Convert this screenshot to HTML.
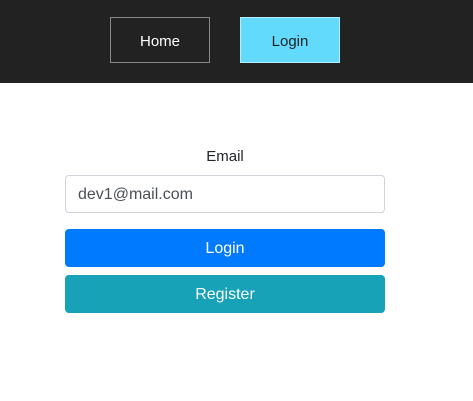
<!DOCTYPE html>
<html><head><style>
body{margin:0;width:473px;height:401px;background:#fff;font-family:"Liberation Sans",sans-serif;position:relative;overflow:hidden}
.nav{position:absolute;left:0;top:0;width:473px;height:83px;background:#222}
.b{position:absolute;box-sizing:border-box;display:flex;align-items:center;justify-content:center;font-size:15px;padding-top:2px}
</style></head><body>
<div class="nav"></div>
<div class="b" style="left:110px;top:17px;width:100px;height:46px;border:1px solid #888;color:#fff">Home</div>
<div class="b" style="left:240px;top:17px;width:100px;height:46px;border:1px solid #b8ecff;background:#61dafb;color:#222">Login</div>
<div class="b" style="left:65px;top:145px;width:320px;height:20px;color:#212529">Email</div>
<div class="b" style="left:65px;top:175px;width:320px;height:38px;border:1px solid #ced4da;border-radius:4px;justify-content:flex-start;padding-left:12px;color:#495057;font-size:16px">dev1@mail.com</div>
<div class="b" style="left:65px;top:229px;width:320px;height:38px;background:#007bff;border-radius:4px;color:#fff;font-size:16px">Login</div>
<div class="b" style="left:65px;top:275px;width:320px;height:38px;background:#17a2b8;border-radius:4px;color:#fff;font-size:16px">Register</div>
</body></html>
